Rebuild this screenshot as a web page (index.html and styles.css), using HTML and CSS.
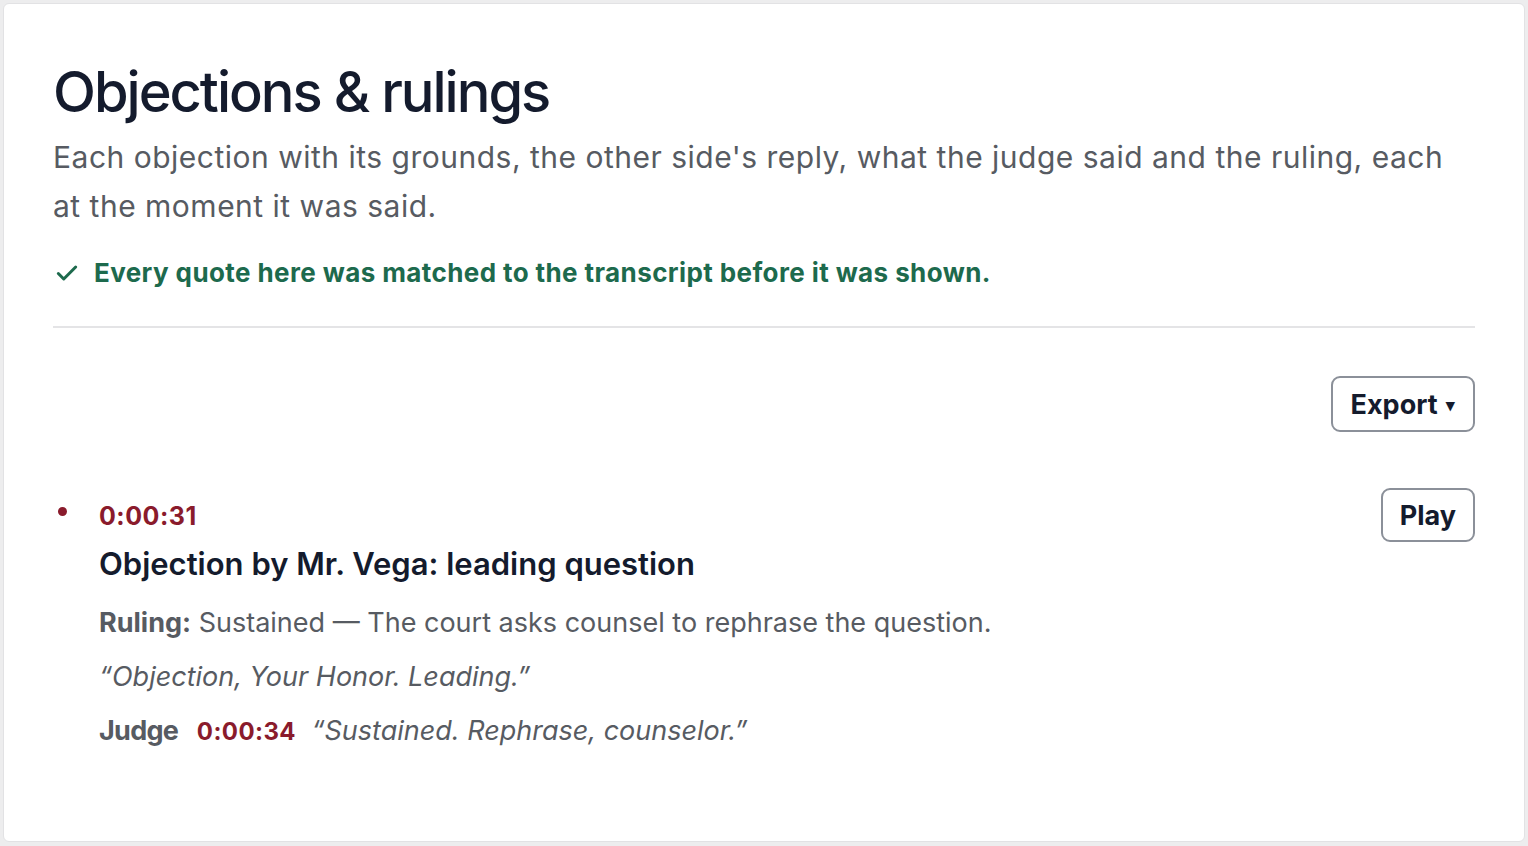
FILE: index.html
```html
<!DOCTYPE html>
<html>
  <head>
    <title>Objections &amp; rulings</title>
    <link rel="stylesheet" href="styles.css">
  </head>
  <body>
    <div class="card">
      <h1>Objections &amp; rulings</h1>
      <p class="subtitle">
        Each objection with its grounds, the other side's reply, what the judge
        said and the ruling, each at the moment it was said.
      </p>
      <div class="verified">
        <!-- check mark -->
        <svg class="check" viewBox="0 0 24 24" fill="none" stroke="currentColor"
          stroke-width="2.8" stroke-linecap="round" stroke-linejoin="round">
          <path d="M4 12.5l5 5L20 6.5" />
        </svg>
        <span>Every quote here was matched to the transcript before it was shown.</span>
      </div>
      <hr class="divider">
      <div class="toolbar">
        <button class="btn">Export <span class="caret">&#9662;</span></button>
      </div>
      <ul class="objections">
        <li class="objection">
          <span class="dot"></span>
          <div class="objection-body">
            <div class="time">0:00:31</div>
            <h3>Objection by Mr. Vega: leading question</h3>
            <p class="ruling"><b>Ruling:</b> Sustained — The court asks counsel to rephrase the question.</p>
            <p class="quote">“Objection, Your Honor. Leading.”</p>
            <p class="reply">
              <b>Judge</b>
              <span class="time">0:00:34</span>
              <span class="quote">“Sustained. Rephrase, counselor.”</span>
            </p>
          </div>
          <button class="btn">Play</button>
        </li>
      </ul>
    </div>
  </body>
</html>
```

FILE: styles.css
```css
:root {
  --ink: #141b2d;
  --muted: #575b62;
  --green: #1d6a4d;
  --maroon: #8a1b2c;
  --line: #e4e4e6;
  --bg: #ededee;
}

html,
body {
  margin: 0;
  padding: 0;
  background: var(--bg);
}

body {
  padding: 3px 3px 2px 3px;
  font-family: Inter, Roboto, Arial, sans-serif;
  color: var(--ink);
}

.card {
  background: #fff;
  border: 1px solid #e2e2e4;
  border-radius: 6px;
  height: 839px;
  box-sizing: border-box;
  padding: 56px 49px 0 49px;
}

h1 {
  font-size: 56px;
  font-weight: 500;
  letter-spacing: -2px;
  line-height: 64px;
  margin: 0;
  color: var(--ink);
}

.subtitle {
  max-width: 1410px;
  font-size: 30px;
  line-height: 49px;
  letter-spacing: 0.5px;
  color: var(--muted);
  margin: 9px 0 0 0;
}

.verified {
  display: flex;
  align-items: center;
  gap: 14px;
  margin-top: 26px;
  color: var(--green);
  font-size: 26px;
  font-weight: 700;
  letter-spacing: 0.4px;
}
.check {
  width: 26px;
  height: 26px;
  margin-left: 1px;
}

.divider {
  border: none;
  border-top: 2px solid var(--line);
  margin: 38px 0 0 0;
}

.toolbar {
  display: flex;
  justify-content: flex-end;
  margin-top: 48px;
}

.btn {
  font-family: Inter, Roboto, sans-serif;
  font-size: 27px;
  font-weight: 700;
  color: var(--ink);
  background: #fff;
  border: 2px solid #8b9099;
  border-radius: 9px;
  height: 56px;
  padding: 0 18px;
  cursor: pointer;
}
.caret {
  font-size: 17px;
  vertical-align: 3px;
  margin-left: 2px;
}

.objections {
  list-style: none;
  margin: 56px 0 0 0;
  padding: 0;
}

.objection {
  display: flex;
  align-items: flex-start;
  gap: 0;
}
.objection .btn {
  height: 54px;
  padding: 0 17px;
}

.dot {
  width: 9px;
  height: 9px;
  border-radius: 50%;
  background: var(--maroon);
  margin: 19px 32px 0 5px;
  flex: none;
}

.objection-body {
  flex: 1;
}

.time {
  color: var(--maroon);
  font-weight: 700;
  font-size: 25px;
  letter-spacing: 0.5px;
  padding-top: 13px;
}

h3 {
  margin: 14px 0 0 0;
  font-size: 31px;
  font-weight: 600;
  color: var(--ink);
}

.ruling,
.reply,
.objection-body > .quote {
  margin: 0;
  font-size: 27px;
  line-height: 54px;
  color: var(--muted);
}
.ruling {
  margin-top: 14px;
}
.ruling b,
.reply b {
  font-weight: 700;
}
.reply b {
  letter-spacing: -0.7px;
}

.quote {
  font-style: italic;
}

.reply .time {
  display: inline;
  padding: 0;
  font-size: 24px;
  letter-spacing: 0.4px;
  margin: 0 8px 0 11px;
}
```
